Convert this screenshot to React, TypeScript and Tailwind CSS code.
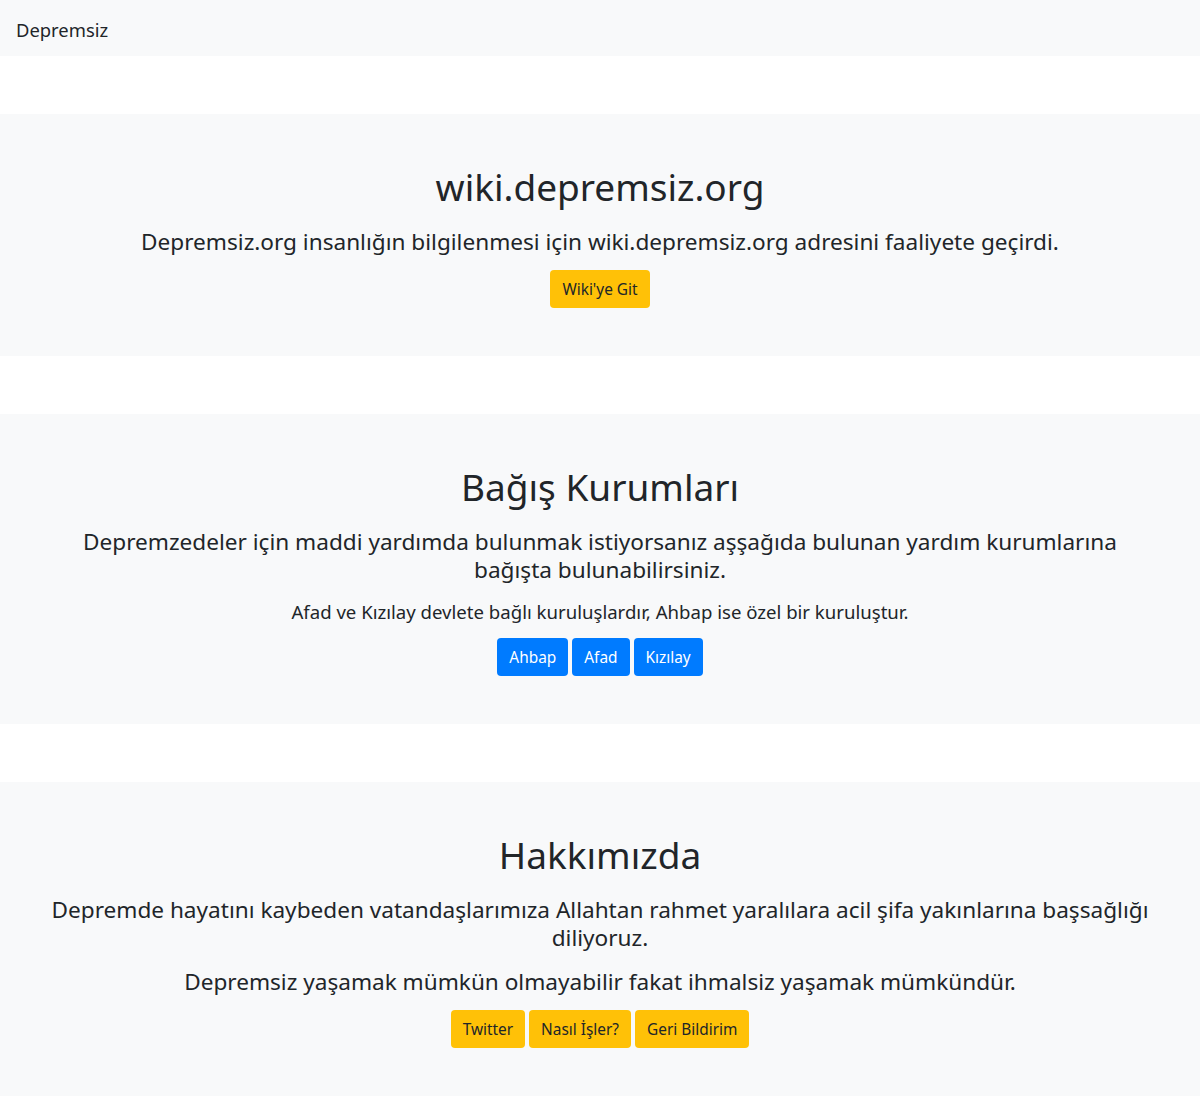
import React from "react";

const font = { fontFamily: '"Noto Sans", "Open Sans", sans-serif' };

function Btn({ label, variant }: { label: string; variant: "warning" | "primary" }) {
  const cls =
    variant === "warning"
      ? "bg-[#ffc107] text-[#212529]"
      : "bg-[#007bff] text-white";
  return (
    <a
      href="#"
      className={`inline-flex items-center h-[38px] px-3 pt-px rounded text-[15.4px] leading-6 ${cls}`}
    >
      {label}
    </a>
  );
}

export default function App() {
  return (
    <div className="min-h-screen bg-white text-[#212529]" style={font}>
      {/* Navbar */}
      <nav className="h-14 bg-[#f8f9fa] flex items-center px-4 pt-1">
        <a href="#" className="text-[18.4px] leading-[30px]">Depremsiz</a>
      </nav>

      {/* Wiki */}
      <section className="mt-[58px] bg-[#f8f9fa] py-12">
        <div className="max-w-[1116px] mx-auto text-center">
          <h1 className="text-[37px] leading-[48px] pt-px mb-[15px]">wiki.depremsiz.org</h1>
          <p className="text-[22.6px] leading-7 pt-[2px] mb-[14px]">
            Depremsiz.org insanlığın bilgilenmesi için wiki.depremsiz.org adresini faaliyete geçirdi.
          </p>
          <div className="flex justify-center gap-1">
            <Btn label="Wiki'ye Git" variant="warning" />
          </div>
        </div>
      </section>

      {/* Bağış */}
      <section className="mt-[58px] bg-[#f8f9fa] py-12">
        <div className="max-w-[1116px] mx-auto text-center">
          <h1 className="text-[37px] leading-[48px] pt-px mb-[15px]">Bağış Kurumları</h1>
          <p className="text-[22.6px] leading-7 pt-[2px] mb-[16px]">
            Depremzedeler için maddi yardımda bulunmak istiyorsanız aşşağıda bulunan yardım kurumlarına bağışta bulunabilirsiniz.
          </p>
          <p className="text-[18.6px] leading-6 mb-[14px]">
            Afad ve Kızılay devlete bağlı kuruluşlardır, Ahbap ise özel bir kuruluştur.
          </p>
          <div className="flex justify-center gap-1">
            <Btn label="Ahbap" variant="primary" />
            <Btn label="Afad" variant="primary" />
            <Btn label="Kızılay" variant="primary" />
          </div>
        </div>
      </section>

      {/* Hakkımızda */}
      <section className="mt-[58px] bg-[#f8f9fa] py-12">
        <div className="max-w-[1116px] mx-auto text-center">
          <h1 className="text-[37px] leading-[48px] pt-px mb-[15px]">Hakkımızda</h1>
          <p className="text-[22.6px] leading-7 pt-[2px] mb-[14px]">
            Depremde hayatını kaybeden vatandaşlarımıza Allahtan rahmet yaralılara acil şifa yakınlarına başsağlığı diliyoruz.
          </p>
          <p className="text-[22.6px] leading-7 pt-[2px] mb-[14px]">
            Depremsiz yaşamak mümkün olmayabilir fakat ihmalsiz yaşamak mümkündür.
          </p>
          <div className="flex justify-center gap-1">
            <Btn label="Twitter" variant="warning" />
            <Btn label="Nasıl İşler?" variant="warning" />
            <Btn label="Geri Bildirim" variant="warning" />
          </div>
        </div>
      </section>
    </div>
  );
}
